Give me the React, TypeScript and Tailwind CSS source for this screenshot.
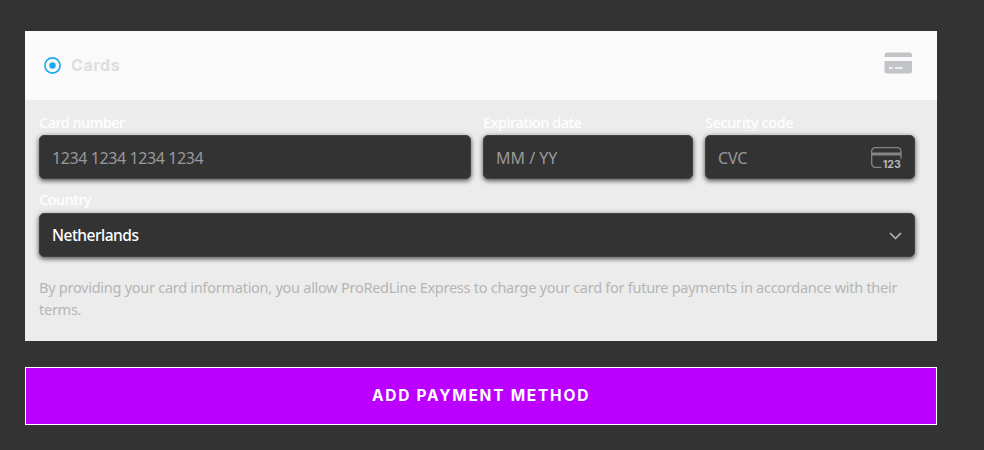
import { useState } from 'react'
import type { ReactNode } from 'react'

const fieldBox =
  'block h-[44px] w-full rounded-[5px] border border-[#424242] bg-[#333333] px-3 pt-px shadow-[0_2px_4px_rgba(0,0,0,0.5),0_1px_6px_rgba(0,0,0,0.25)] outline-none placeholder:text-[#999999]'

const RadioIcon = () => (
  <svg width="17" height="17" viewBox="0 0 17 17" fill="none">
    <circle cx="8.5" cy="8.5" r="7.6" stroke="#17aaec" strokeWidth="1.6" />
    <circle cx="8.5" cy="8.5" r="3.2" fill="#17aaec" />
  </svg>
)

const CardIcon = () => (
  <svg width="28" height="22" viewBox="0 0 28 22" fill="#c3c4c8">
    <path d="M.5 5V3A2.5 2.5 0 0 1 3 .5h22.500A2.5 2.5 0 0 1 28 3v2z" />
    <path d="M.5 9H28v10a2.5 2.5 0 0 1-2.5 2.5H3A2.5 2.5 0 0 1 .5 19z" />
    <path d="M5 16h4M11 16h7.5" stroke="#fafafa" strokeWidth="1.7" />
  </svg>
)

const CvcIcon = () => (
  <svg className="overflow-visible" width="32" height="24" viewBox="0 0 32 24" fill="none">
    <path
      d="M11.5 20.3H5.200a3.500 3.500 0 0 1-3.500-3.500V4.200A3.500 3.500 0 0 1 5.200.7h22.300a3.500 3.500 0 0 1 3.500 3.500v7.500"
      stroke="#858585"
      strokeWidth="1.3"
    />
    <path d="M1.5 7h29.500" stroke="#858585" strokeWidth="3" />
    <text x="12.7" y="20.700" fill="#b8b8b8" fontFamily="Inter, sans-serif" fontSize="10" fontWeight="700" textLength="18.300" lengthAdjust="spacingAndGlyphs">
      123
    </text>
  </svg>
)

const Field = ({ label, tracking, children }: { label: string; tracking: string; children: ReactNode }) => (
  <label className="block min-w-0">
    <span className={`block h-[20px] text-[14.5px] leading-[20px] font-medium whitespace-nowrap text-white ${tracking}`}>
      {label}
    </span>
    {children}
  </label>
)

const App = () => {
  const [cardNumber, setCardNumber] = useState('')
  const [expiry, setExpiry] = useState('')
  const [cvc, setCvc] = useState('')

  return (
    <main className="h-[450px] w-[984px] overflow-hidden bg-[#333333] pt-[31px] pl-[25px] font-['Noto_Sans',sans-serif]">
      <section className="h-[310px] w-[912px] bg-[#ececec]">
        {/* Payment type */}
        <header className="flex h-[69px] items-center bg-[#fafafa] pr-[25px] pl-[19px]">
          <RadioIcon />
          <span className="mb-[2px] ml-[10px] font-['Inter',sans-serif] text-[16px] font-bold tracking-[0.6px] text-[#dedede]">
            Cards
          </span>
          <span className="mb-[5px] ml-auto">
            <CardIcon />
          </span>
        </header>

        {/* Card details */}
        <div className="pt-[12px] pr-[22px] pl-[14px]">
          <div className="grid grid-cols-[432px_210px_210px] gap-3">
            <Field label="Card number" tracking="mb-[3px] tracking-[-0.53px]">
              <input
                className={`${fieldBox} text-[16px] tracking-[-0.4px] text-white`}
                placeholder="1234 1234 1234 1234"
                value={cardNumber}
                onChange={(e) => setCardNumber(e.target.value)}
              />
            </Field>
            <Field label="Expiration date" tracking="mb-[3px] tracking-[-0.45px]">
              <input
                className={`${fieldBox} text-[16px] text-white`}
                placeholder="MM / YY"
                value={expiry}
                onChange={(e) => setExpiry(e.target.value)}
              />
            </Field>
            <Field label="Security code" tracking="mb-[3px] tracking-[-0.35px]">
              <span className="relative block">
                <input
                  className={`${fieldBox} text-[16px] tracking-[-0.2px] text-white`}
                  placeholder="CVC"
                  value={cvc}
                  onChange={(e) => setCvc(e.target.value)}
                />
                <span className="absolute top-[12px] right-[13px]">
                  <CvcIcon />
                </span>
              </span>
            </Field>
          </div>

          <div className="mt-[10px]">
            <Field label="Country" tracking="mb-[4px] tracking-[-0.48px]">
              <button type="button" className={`${fieldBox} text-[15.5px] text-white`}>
                <span className="flex items-center justify-between">
                  <span className="font-medium tracking-[-0.5px]">Netherlands</span>
                  <svg width="13" height="8" viewBox="0 0 13 8" fill="none" stroke="#bcbcbc" strokeWidth="1.5">
                    <path d="M1 1l5.500 5.500L12 1" />
                  </svg>
                </span>
              </button>
            </Field>
          </div>

          <p className="mt-[19px] text-[14.5px] leading-[22px] tracking-[-0.265px] whitespace-nowrap text-[#b5b5b5]">
            By providing your card information, you allow ProRedLine Express to charge your card for future payments in accordance with their
            <br />
            terms.
          </p>
        </div>
      </section>

      <button
        type="button"
        className="mt-[26px] block h-[58px] w-[912px] border border-white bg-[#bb00ff] font-['Inter',sans-serif] text-[15.5px] font-bold tracking-[1.75px] text-white"
      >
        ADD PAYMENT METHOD
      </button>
    </main>
  )
}

export default App
